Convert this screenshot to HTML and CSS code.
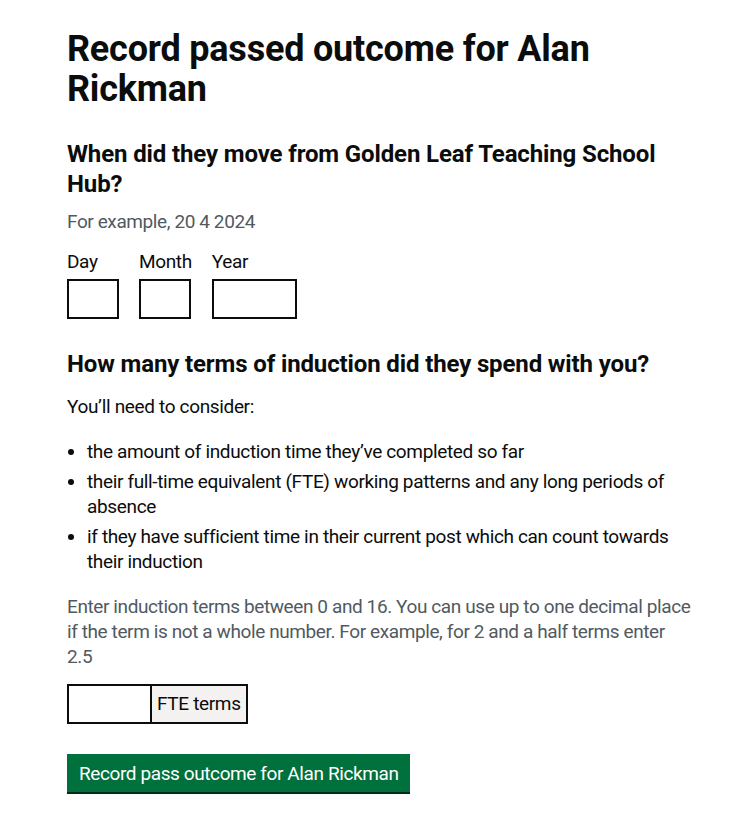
FILE: index.html
```html
<!DOCTYPE html>
<html lang="en">
<head>
<meta charset="utf-8">
<title>Record passed outcome for Alan Rickman</title>
<link rel="stylesheet" href="styles.css">
</head>
<body>
<main class="page">
  <h1 class="heading-l">Record passed outcome for Alan Rickman</h1>

  <div class="form-group">
    <fieldset class="fieldset">
      <legend class="legend-m">When did they move from Golden Leaf Teaching School Hub?</legend>
      <div class="hint hint-after-legend">For example, 20 4 2024</div>
      <div class="date-input">
        <div class="date-item">
          <label class="label" for="d">Day</label>
          <input class="input w2" id="d" type="text">
        </div>
        <div class="date-item">
          <label class="label" for="m">Month</label>
          <input class="input w2" id="m" type="text">
        </div>
        <div class="date-item">
          <label class="label" for="y">Year</label>
          <input class="input w4" id="y" type="text">
        </div>
      </div>
    </fieldset>
  </div>

  <div class="form-group">
    <h2 class="legend-m">How many terms of induction did they spend with you?</h2>
    <p class="body">You’ll need to consider:</p>
    <ul class="list">
      <li>the amount of induction time they’ve completed so far</li>
      <li>their full-time equivalent (FTE) working patterns and any long periods of absence</li>
      <li>if they have sufficient time in their current post which can count towards their induction</li>
    </ul>
    <div class="hint">Enter induction terms between 0 and 16. You can use up to one decimal place if the term is not a whole number. For example, for 2 and a half terms enter 2.5</div>
    <div class="input-wrapper">
      <input class="input w3" type="text">
      <div class="suffix">FTE terms</div>
    </div>
  </div>

  <button class="button" type="submit">Record pass outcome for Alan Rickman</button>
</main>
</body>
</html>
```

FILE: styles.css
```css
* { box-sizing: border-box; }
html, body { margin: 0; padding: 0; background: #fff; }
body {
  font-family: Roboto, "Liberation Sans", Arial, sans-serif;
  color: #0b0c0c;
  letter-spacing: -0.35px;
  -webkit-font-smoothing: antialiased;
}
.page {
  padding: 29px 0 40px 67px;
  width: 692px;
}
.heading-l {
  font-size: 36px;
  line-height: 40px;
  font-weight: 700;
  letter-spacing: -0.2px;
  margin: 0 0 30px;
}
.form-group { margin-bottom: 30px; }
.fieldset { border: 0; margin: 0; padding: 0; min-width: 0; }
.legend-m {
  font-size: 24px;
  line-height: 30px;
  font-weight: 700;
  letter-spacing: -0.13px;
  margin: 0 0 15px;
  padding: 0;
}
.hint {
  font-size: 19px;
  line-height: 25px;
  color: #505a5f;
  letter-spacing: -0.4px;
  margin-bottom: 15px;
}
.hint-after-legend { margin-top: -5px; }
.date-input { display: flex; gap: 20px; }
.date-item { display: flex; flex-direction: column; }
.label {
  font-size: 19px;
  line-height: 25px;
  margin-bottom: 5px;
}
.input {
  height: 40px;
  border: 2px solid #0b0c0c;
  border-radius: 0;
  padding: 5px;
  font: inherit;
  font-size: 19px;
  margin: 0;
  background: #fff;
}
.w2 { width: 52px; }
.w3 { width: 85px; }
.w4 { width: 85px; }
.body {
  font-size: 19px;
  line-height: 25px;
  margin: 0 0 20px;
}
.list {
  font-size: 19px;
  line-height: 25px;
  margin: 0 0 20px;
  padding-left: 20px;
}
.list li { margin-bottom: 5px; }
.list li:last-child { margin-bottom: 0; }
.input-wrapper { display: flex; }
.suffix {
  height: 40px;
  border: 2px solid #0b0c0c;
  border-left: 0;
  background: #f3f2f1;
  font-size: 19px;
  line-height: 36px;
  padding: 0 5px;
  white-space: nowrap;
}
.button {
  font: inherit;
  font-size: 19px;
  line-height: 19px;
  letter-spacing: -0.4px;
  color: #fff;
  background: #00703c;
  border: 2px solid transparent;
  border-radius: 0;
  box-shadow: 0 2px 0 #002d18;
  padding: 8px 10px 7px;
  margin: 0;
  cursor: pointer;
}
```
